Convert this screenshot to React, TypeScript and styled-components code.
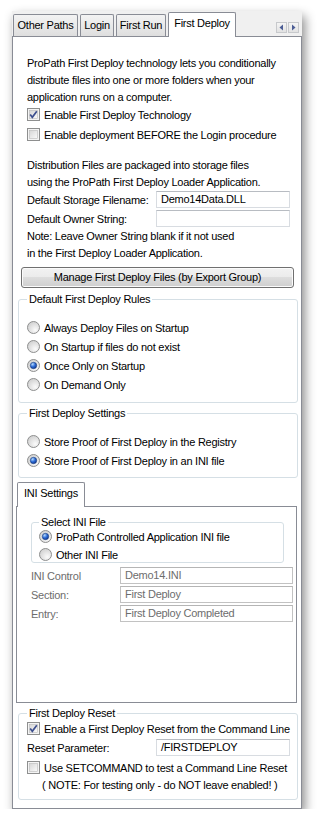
import styled, { createGlobalStyle } from 'styled-components';

const GlobalStyle = createGlobalStyle`
  body {
    margin: 0;
    background: #fff;
    font-family: 'Liberation Sans', Arial, sans-serif;
    font-size: 11px;
    letter-spacing: -0.25px;
    color: #000;
  }
  * { box-sizing: border-box; }
`;

const Window = styled.div`
  margin: 11px 0 0 12px;
  width: 290px;
  box-shadow: 3px 5px 10px rgba(0, 0, 0, 0.45);
`;

const TabStrip = styled.div<{ $bg?: string }>`
  display: flex;
  align-items: flex-end;
  height: 25px;
  padding-left: 1px;
  background: ${({ $bg }) => $bg || '#f0f0f0'};
`;

const Tab = styled.div<{ $active?: boolean; $w: number }>`
  position: relative;
  z-index: 1;
  width: ${({ $w }) => $w}px;
  height: ${({ $active }) => ($active ? 25 : 22)}px;
  margin-right: ${({ $active }) => ($active ? 0 : 2)}px;
  margin-bottom: ${({ $active }) => ($active ? -1 : 0)}px;
  padding-top: 4px;
  border: 1px solid #898c95;
  border-bottom: none;
  border-radius: 2px 2px 0 0;
  background: ${({ $active }) =>
    $active ? '#fff' : 'linear-gradient(#f3f3f3, #e9e9e9 50%, #dedede)'};
  text-align: center;
  line-height: 13px;
  white-space: nowrap;
`;

const ScrollButtons = styled.div`
  display: flex;
  gap: 1px;
  margin-left: auto;
  margin-right: 3px;
  align-self: flex-start;
  margin-top: 11px;
`;

const ScrollButton = styled.div`
  width: 11px;
  height: 11px;
  border: 1px solid #c7c9cc;
  background: linear-gradient(#f4f4f4, #e2e2e2);
  display: flex;
  align-items: center;
  justify-content: center;
`;

const Panel = styled.div`
  height: 773px;
  border: 1px solid #898c95;
  background: #fff;
  padding: 0 3px 0 5px;
  display: flex;
  flex-direction: column;
`;

const Para = styled.p<{ $mt?: number; $indent?: number }>`
  margin: ${({ $mt }) => $mt || 0}px 0 0 0;
  padding-left: ${({ $indent }) => $indent ?? 9}px;
  line-height: 17px;
  white-space: nowrap;
`;

const OptionRow = styled.label<{ $mt?: number; $indent?: number; $h?: number }>`
  display: flex;
  align-items: center;
  gap: 4px;
  height: ${({ $h }) => $h || 17}px;
  margin-top: ${({ $mt }) => $mt || 0}px;
  padding-left: ${({ $indent }) => $indent ?? 0}px;
  white-space: nowrap;
  svg { flex-shrink: 0; }
`;

const FieldRow = styled.div<{ $mt?: number; $indent?: number; $label: number; $disabled?: boolean }>`
  display: grid;
  grid-template-columns: ${({ $label }) => $label}px auto;
  align-items: center;
  height: 17px;
  margin-top: ${({ $mt }) => $mt || 0}px;
  padding-left: ${({ $indent }) => $indent ?? 0}px;
  color: ${({ $disabled }) => ($disabled ? '#6d6d6d' : '#000')};
  white-space: nowrap;
`;

const TextBox = styled.div<{ $w: number; $disabled?: boolean }>`
  width: ${({ $w }) => $w}px;
  height: 17px;
  padding-left: 4px;
  line-height: 15px;
  border: 1px solid ${({ $disabled }) => ($disabled ? '#c2c2c2' : '#d8dce1')};
  border-top-color: ${({ $disabled }) => ($disabled ? '#b5b5b5' : '#b8bcc2')};
  background: #fff;
  color: ${({ $disabled }) => ($disabled ? '#6d6d6d' : '#000')};
`;

const Button = styled.div`
  margin: 5px 0 0 3px;
  width: 273px;
  height: 21px;
  border: 1px solid #707070;
  border-radius: 3px;
  background: linear-gradient(#f2f2f2, #ebebeb 50%, #dddddd 50%, #cfcfcf);
  box-shadow: inset 0 0 0 1px #fbfbfb;
  text-align: center;
  line-height: 19px;
`;

const Group = styled.fieldset<{ $mt?: number; $pt?: number; $pb?: number; $pl?: number; $w: number; $ml?: number }>`
  margin: ${({ $mt }) => $mt || 0}px 0 0 ${({ $ml }) => $ml || 0}px;
  width: ${({ $w }) => $w}px;
  min-width: 0;
  padding: ${({ $pt }) => $pt || 0}px 0 ${({ $pb }) => $pb || 0}px ${({ $pl }) => $pl ?? 8}px;
  border: 1px solid #d5dfe5;
  border-radius: 3px;
`;

const Legend = styled.legend`
  padding: 0 2px;
  line-height: 13px;
`;

const RadioList = styled.div<{ $gap?: number }>`
  display: flex;
  flex-direction: column;
  gap: ${({ $gap }) => $gap || 0}px;
`;

const SubTabs = styled.div`
  margin: 3px 0 0 -2px;
  width: 281px;
  display: flex;
  flex-direction: column;
`;

const SubPanel = styled.div`
  height: 197px;
  border: 1px solid #898c95;
  background: #fff;
  padding-top: 9px;
`;

const Note = styled.div`
  height: 17px;
  margin-top: 1px;
  padding-left: 15px;
  line-height: 17px;
  white-space: nowrap;
`;

function CheckBox({ checked }: { checked?: boolean }) {
  return (
    <svg width="13" height="13" viewBox="0 0 13 13">
      <defs>
        <linearGradient id="cbfill" x1="0" y1="0" x2="1" y2="1">
          <stop offset="0" stopColor="#d6d6d6" />
          <stop offset="1" stopColor="#fbfbfb" />
        </linearGradient>
      </defs>
      <rect x="0.5" y="0.5" width="12" height="12" fill="#f4f4f4" stroke="#8e8f8f" />
      <rect x="2.5" y="2.5" width="8" height="8" fill="url(#cbfill)" stroke="#b9b9b9" strokeWidth="0.6" />
      {checked && (
        <path d="M3.2 6.6 L5.3 9.3 L9.8 3.2" fill="none" stroke="#3d4f8e" strokeWidth="1.7" />
      )}
    </svg>
  );
}

function Radio({ checked }: { checked?: boolean }) {
  return (
    <svg width="13" height="13" viewBox="0 0 13 13">
      <defs>
        <radialGradient id="rbfill" cx="0.65" cy="0.7" r="0.7">
          <stop offset="0" stopColor="#fbfbfb" />
          <stop offset="1" stopColor="#d2d2d2" />
        </radialGradient>
        <radialGradient id="rbdot" cx="0.35" cy="0.3" r="0.8">
          <stop offset="0" stopColor="#b7dcff" />
          <stop offset="0.5" stopColor="#2c6bd6" />
          <stop offset="1" stopColor="#0c2f86" />
        </radialGradient>
      </defs>
      <circle cx="6.5" cy="6.5" r="6" fill="url(#rbfill)" stroke="#8e8f8f" />
      {checked && <circle cx="6.5" cy="6.5" r="3.2" fill="url(#rbdot)" stroke="#1b3c7a" strokeWidth="0.6" />}
    </svg>
  );
}

function Arrow({ dir }: { dir: 'left' | 'right' }) {
  return (
    <svg width="7" height="7" viewBox="0 0 7 7">
      {dir === 'left' ? (
        <path d="M5 0.5 L1.5 3.5 L5 6.5 Z" fill="#4b5d95" />
      ) : (
        <path d="M2 0.5 L5.5 3.5 L2 6.5 Z" fill="#4b5d95" />
      )}
    </svg>
  );
}

export default function App() {
  return (
    <>
      <GlobalStyle />
      <Window>
        <TabStrip>
          <Tab $w={65}>Other Paths</Tab>
          <Tab $w={34}>Login</Tab>
          <Tab $w={50}>First Run</Tab>
          <Tab $w={68} $active>First Deploy</Tab>
          <ScrollButtons>
            <ScrollButton><Arrow dir="left" /></ScrollButton>
            <ScrollButton><Arrow dir="right" /></ScrollButton>
          </ScrollButtons>
        </TabStrip>

        <Panel>
          <Para $mt={18}>
            ProPath First Deploy technology lets you conditionally<br />
            distribute files into one or more folders when your<br />
            application runs on a computer.
          </Para>
          <OptionRow $indent={9}>
            <CheckBox checked />
            Enable First Deploy Technology
          </OptionRow>
          <OptionRow $indent={9} $mt={3}>
            <CheckBox />
            Enable deployment BEFORE the Login procedure
          </OptionRow>

          <Para $mt={14}>
            Distribution Files are packaged into storage files<br />
            using the ProPath First Deploy Loader Application.
          </Para>
          <FieldRow $indent={9} $label={129}>
            <span>Default Storage Filename:</span>
            <TextBox $w={134}>Demo14Data.DLL</TextBox>
          </FieldRow>
          <FieldRow $indent={9} $label={129} $mt={2}>
            <span>Default Owner String:</span>
            <TextBox $w={134} />
          </FieldRow>
          <Para $mt={1}>
            Note: Leave Owner String blank if it not used<br />
            in the First Deploy Loader Application.
          </Para>

          <Button>Manage First Deploy Files (by Export Group)</Button>

          <Group $mt={5} $w={280} $pt={12} $pb={8}>
            <Legend>Default First Deploy Rules</Legend>
            <RadioList>
              <OptionRow $h={19}><Radio />Always Deploy Files on Startup</OptionRow>
              <OptionRow $h={19}><Radio />On Startup if files do not exist</OptionRow>
              <OptionRow $h={19}><Radio checked />Once Only on Startup</OptionRow>
              <OptionRow $h={19}><Radio />On Demand Only</OptionRow>
            </RadioList>
          </Group>

          <Group $mt={4} $w={280} $pt={12} $pb={7}>
            <Legend>First Deploy Settings</Legend>
            <RadioList>
              <OptionRow $h={19}><Radio />Store Proof of First Deploy in the Registry</OptionRow>
              <OptionRow $h={19}><Radio checked />Store Proof of First Deploy in an INI file</OptionRow>
            </RadioList>
          </Group>

          <SubTabs>
            <TabStrip $bg="#fff">
              <Tab $w={68} $active>INI Settings</Tab>
            </TabStrip>
            <SubPanel>
              <Group $w={253} $ml={14} $pl={7}>
                <Legend>Select INI File</Legend>
                <RadioList $gap={3}>
                  <OptionRow $h={15}><Radio checked />ProPath Controlled Application INI file</OptionRow>
                  <OptionRow $h={15}><Radio />Other INI File</OptionRow>
                </RadioList>
              </Group>
              <FieldRow $indent={14} $label={89} $mt={4} $disabled>
                <span>INI Control</span>
                <TextBox $w={173} $disabled>Demo14.INI</TextBox>
              </FieldRow>
              <FieldRow $indent={14} $label={89} $mt={2} $disabled>
                <span>Section:</span>
                <TextBox $w={173} $disabled>First Deploy</TextBox>
              </FieldRow>
              <FieldRow $indent={14} $label={89} $mt={2} $disabled>
                <span>Entry:</span>
                <TextBox $w={173} $disabled>First Deploy Completed</TextBox>
              </FieldRow>
            </SubPanel>
          </SubTabs>

          <Group $mt={4} $w={280} $pb={5}>
            <Legend>First Deploy Reset</Legend>
            <OptionRow>
              <CheckBox checked />
              Enable a First Deploy Reset from the Command Line
            </OptionRow>
            <FieldRow $label={129} $mt={2}>
              <span>Reset Parameter:</span>
              <TextBox $w={134}>/FIRSTDEPLOY</TextBox>
            </FieldRow>
            <OptionRow $mt={3}>
              <CheckBox />
              Use SETCOMMAND to test a Command Line Reset
            </OptionRow>
            <Note>( NOTE: For testing only - do NOT leave enabled! )</Note>
          </Group>
        </Panel>
      </Window>
    </>
  );
}
